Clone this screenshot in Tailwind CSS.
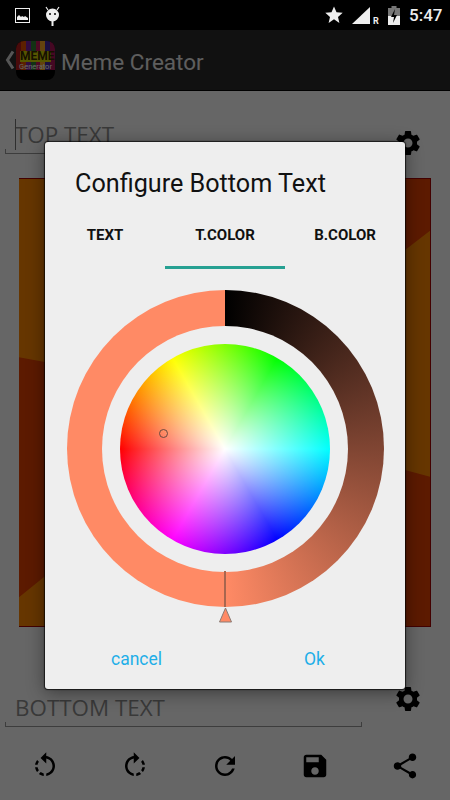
<!DOCTYPE html>
<html lang="en">
<head>
    <meta charset="UTF-8">
    <meta name="viewport" content="width=device-width, initial-scale=1.0">
    <title>Meme Creator</title>
    <script src="https://cdn.jsdelivr.net/npm/@tailwindcss/browser@4"></script>
</head>
<body class="bg-black font-['Roboto',sans-serif]">
    <div class="relative w-[450px] h-[800px] overflow-hidden bg-white flex flex-col">
        <!-- Status bar -->
        <div class="relative z-20 h-[30px] bg-black flex items-center text-[#eeeeee]">
            <svg class="absolute left-[15px] top-[8px] w-[15px] h-[15px]" viewBox="0 0 15 15">
                <rect x="0.5" y="0.5" width="14" height="14" fill="none" stroke="#eeeeee"/>
                <path d="M2 12V9l2-2 2 2 1-1 2 1 1-1 3 2v2z" fill="#eeeeee"/>
            </svg>
            <svg class="absolute left-[45px] top-[5px] w-[15px] h-[22px]" viewBox="0 0 15 22">
                <path d="M1 2l2 3M14 2l-2 3" stroke="#eeeeee" stroke-width="1.2"/>
                <path d="M1 10a6.500 6.500 0 0 1 13 0a6.500 6.500 0 0 1-13 0z" fill="#eeeeee"/>
                <rect x="6.500" y="16" width="2" height="5" fill="#eeeeee"/>
                <circle cx="5" cy="9" r="1" fill="#000"/>
                <circle cx="10" cy="9" r="1" fill="#000"/>
            </svg>
            <svg class="absolute left-[325px] top-[6px] w-[18px] h-[18px]" viewBox="0 0 18 18">
                <path d="M9 0.500l2.500 5.800 6.200.5-4.700 4.100 1.400 6.100L9 13.300l-5.400 3.700 1.400-6.100L.3 6.800l6.200-.5z" fill="#eeeeee"/>
            </svg>
            <svg class="absolute left-[352px] top-[7px] w-[18px] h-[17px]" viewBox="0 0 18 17">
                <path d="M18 0v17H0z" fill="#eeeeee"/>
            </svg>
            <span class="absolute left-[373px] top-[17px] text-[9px] leading-[9px] font-bold">R</span>
            <svg class="absolute left-[388px] top-[6px] w-[12px] h-[19px]" viewBox="0 0 12 19">
                <path d="M3.500 0h5v2H12v17H0V2h3.500z" fill="#777777"/>
                <path d="M0 10h12v9H0z" fill="#eeeeee"/>
                <path d="M7 3L3 11h3l-1 6 4-8H6z" fill="#000"/>
            </svg>
            <span class="absolute left-[409px] top-[4px] text-[17px] leading-[22px] font-medium">5:47</span>
        </div>

        <!-- App bar -->
        <div class="h-[61px] bg-[#2b2b2b] flex items-center pl-[5px] border-b border-black">
            <svg class="w-[10px] h-[20px]" viewBox="0 0 10 20">
                <path d="M8 1.500L2.500 10 8 18.500" fill="none" stroke="#d8d8d8" stroke-width="3"/>
            </svg>
            <div class="relative w-[39px] h-[39px] ml-[1px] rounded-lg overflow-hidden bg-black flex flex-col">
                <div class="h-[29px] flex">
                    <div class="flex-1 bg-[#b71c1c]"></div>
                    <div class="flex-1 bg-[#e65100]"></div>
                    <div class="flex-1 bg-[#7b1fa2]"></div>
                    <div class="flex-1 bg-[#2e7d32]"></div>
                    <div class="flex-1 bg-[#c2185b]"></div>
                    <div class="flex-1 bg-[#f9a825]"></div>
                    <div class="flex-1 bg-[#4527a0]"></div>
                    <div class="flex-1 bg-[#ad1457]"></div>
                </div>
                <div class="absolute left-[4px] top-[10px] w-[31px] h-[11px] bg-[#d6d600] text-[#3a2a00] text-[12px] leading-[11px] font-bold text-center">MEME</div>
                <div class="absolute left-0 top-[21px] w-full text-center text-white text-[7.500px] leading-[9px] whitespace-nowrap">Generator</div>
            </div>
            <h1 class="ml-[6px] mt-[4px] text-[22.500px] leading-[30px] text-[#ececec]">Meme Creator</h1>
        </div>

        <!-- Top text row -->
        <div class="h-[87px] relative flex items-start">
            <div class="ml-[5px] mt-[29px] w-[375px] h-[34px] border-b border-[#999999] relative">
                <p class="absolute left-[10px] top-0 font-['Open_Sans',sans-serif] text-[22.400px] leading-[30px] text-[#909090]">TOP TEXT</p>
                <div class="absolute left-[10px] -top-[1px] w-px h-[31px] bg-[#777777]"></div>
                <div class="absolute left-0 bottom-0 w-px h-[4px] bg-[#999999]"></div>
            </div>
            <svg class="ml-[13px] mt-[37px] w-[30px] h-[30px]" viewBox="0 0 24 24">
                <path d="M19.140 12.940c.04-.3.06-.61.06-.94 0-.32-.02-.64-.07-.94l2.030-1.580c.18-.14.23-.41.12-.61l-1.920-3.320c-.12-.22-.37-.29-.59-.22l-2.390.96c-.5-.38-1.030-.7-1.620-.94l-.36-2.540c-.04-.24-.24-.41-.48-.41h-3.840c-.24 0-.43.17-.47.41l-.36 2.540c-.59.24-1.130.57-1.620.94l-2.390-.96c-.22-.08-.47 0-.59.22L2.740 8.870c-.12.21-.08.47.12.61l2.030 1.580c-.05.3-.09.63-.09.94s.02.64.07.94l-2.030 1.580c-.18.14-.23.41-.12.61l1.920 3.320c.12.22.37.29.59.22l2.390-.96c.5.38 1.030.7 1.620.94l.36 2.540c.05.24.24.41.48.41h3.840c.24 0 .44-.17.47-.41l.36-2.540c.59-.24 1.130-.56 1.620-.94l2.390.96c.22.08.47 0 .59-.22l1.920-3.320c.12-.22.07-.47-.12-.61l-2.010-1.580zM12 15.600c-1.980 0-3.600-1.620-3.600-3.600s1.620-3.600 3.600-3.600 3.600 1.620 3.600 3.600-1.620 3.600-3.600 3.600z" fill="#000"/>
            </svg>
        </div>

        <!-- Meme image -->
        <div class="mx-[19px] h-[449px] shrink-0 bg-[#e64100] border-r border-t border-b border-[#a80000]">
            <svg class="w-full h-full block" viewBox="0 0 412 449" preserveAspectRatio="none">
                <path d="M0 0H60V190L0 179z" fill="#ff8800"/>
                <path d="M0 420L26 399L60 370V449H0z" fill="#ff8800"/>
                <path d="M360 90L386 72L412 52V299L386 292L360 285z" fill="#ff8800"/>
            </svg>
        </div>

        <!-- Bottom text row -->
        <div class="h-[124px] shrink-0 flex items-start">
            <div class="ml-[5px] mt-[64px] w-[357px] h-[36px] border-b border-[#999999] relative">
                <p class="absolute left-[10px] top-[2px] font-['Open_Sans',sans-serif] text-[22.400px] leading-[30px] text-[#909090]">BOTTOM TEXT</p>
                <div class="absolute left-0 bottom-0 w-px h-[4px] bg-[#999999]"></div>
                <div class="absolute right-0 bottom-0 w-px h-[4px] bg-[#999999]"></div>
            </div>
            <svg class="ml-[31px] mt-[57px] w-[30px] h-[30px]" viewBox="0 0 24 24">
                <path d="M19.140 12.940c.04-.3.06-.61.06-.94 0-.32-.02-.64-.07-.94l2.030-1.580c.18-.14.23-.41.12-.61l-1.920-3.320c-.12-.22-.37-.29-.59-.22l-2.390.96c-.5-.38-1.030-.7-1.620-.94l-.36-2.540c-.04-.24-.24-.41-.48-.41h-3.840c-.24 0-.43.17-.47.41l-.36 2.540c-.59.24-1.130.57-1.620.94l-2.390-.96c-.22-.08-.47 0-.59.22L2.740 8.870c-.12.21-.08.47.12.61l2.030 1.580c-.05.3-.09.63-.09.94s.02.64.07.94l-2.030 1.580c-.18.14-.23.41-.12.61l1.920 3.320c.12.22.37.29.59.22l2.390-.96c.5.38 1.030.7 1.620.94l.36 2.540c.05.24.24.41.48.41h3.840c.24 0 .44-.17.47-.41l.36-2.540c.59-.24 1.130-.56 1.620-.94l2.390.96c.22.08.47 0 .59-.22l1.920-3.320c.12-.22.07-.47-.12-.61l-2.010-1.580zM12 15.600c-1.980 0-3.600-1.620-3.600-3.600s1.620-3.600 3.600-3.600 3.600 1.620 3.600 3.600-1.620 3.600-3.600 3.600z" fill="#000"/>
            </svg>
        </div>

        <!-- Bottom toolbar -->
        <div class="h-[49px] shrink-0 grid grid-cols-5 items-start justify-items-center">
            <svg class="w-[30px] h-[30px]" viewBox="0 0 24 24"><path d="M7.110 8.530L5.700 7.110C4.800 8.270 4.240 9.610 4.070 11h2.020c.14-.87.49-1.720 1.020-2.470zM6.090 13H4.070c.17 1.390.72 2.730 1.620 3.890l1.410-1.420c-.52-.75-.87-1.590-1.010-2.470zm1.010 5.320c1.160.9 2.510 1.440 3.900 1.610V17.900c-.87-.15-1.710-.49-2.460-1.030L7.100 18.320zM13 4.070V1L8.450 5.550 13 10V6.090c2.840.48 5 2.940 5 5.910s-2.160 5.430-5 5.910v2.020c3.950-.49 7-3.850 7-7.930s-3.050-7.440-7-7.930z" fill="#000"/></svg>
            <svg class="w-[30px] h-[30px]" viewBox="0 0 24 24"><path d="M15.550 5.550L11 1v3.070C7.060 4.560 4 7.920 4 12s3.050 7.440 7 7.930v-2.020c-2.840-.48-5-2.940-5-5.910s2.160-5.430 5-5.910V10l4.550-4.450zM19.930 11c-.17-1.390-.72-2.730-1.620-3.890l-1.420 1.420c.54.75.88 1.600 1.020 2.470h2.020zM13 17.900v2.020c1.390-.17 2.740-.71 3.900-1.610l-1.440-1.440c-.75.54-1.590.89-2.460 1.030zm3.890-2.420l1.420 1.410c.9-1.160 1.450-2.500 1.620-3.890h-2.020c-.14.87-.48 1.720-1.020 2.480z" fill="#000"/></svg>
            <svg class="w-[30px] h-[30px]" viewBox="0 0 24 24"><path d="M17.650 6.350C16.200 4.900 14.210 4 12 4c-4.420 0-7.990 3.580-7.990 8s3.570 8 7.990 8c3.730 0 6.840-2.550 7.730-6h-2.080c-.82 2.330-3.040 4-5.650 4-3.310 0-6-2.690-6-6s2.690-6 6-6c1.660 0 3.140.69 4.220 1.780L13 11h7V4l-2.350 2.350z" fill="#000"/></svg>
            <svg class="w-[30px] h-[30px]" viewBox="0 0 24 24"><path d="M17 3H5c-1.110 0-2 .9-2 2v14c0 1.100.89 2 2 2h14c1.100 0 2-.9 2-2V7l-4-4zm-5 16c-1.660 0-3-1.340-3-3s1.340-3 3-3 3 1.340 3 3-1.340 3-3 3zm3-10H5V5h10v4z" fill="#000"/></svg>
            <svg class="w-[30px] h-[30px]" viewBox="0 0 24 24"><path d="M18 16.080c-.76 0-1.440.3-1.960.77L8.910 12.700c.05-.23.09-.46.09-.7s-.04-.47-.09-.7l7.050-4.110c.54.5 1.250.81 2.040.81 1.660 0 3-1.340 3-3s-1.340-3-3-3-3 1.340-3 3c0 .24.04.47.09.7L8.040 9.810C7.500 9.310 6.790 9 6 9c-1.660 0-3 1.340-3 3s1.340 3 3 3c.79 0 1.500-.31 2.040-.81l7.120 4.160c-.05.21-.08.43-.08.65 0 1.610 1.310 2.920 2.920 2.920 1.610 0 2.920-1.310 2.920-2.920s-1.310-2.920-2.920-2.920z" fill="#000"/></svg>
        </div>

        <!-- Dim layer -->
        <div class="absolute inset-0 bg-black/60 z-10"></div>

        <!-- Dialog -->
        <div class="absolute z-20 left-[45px] top-[142px] w-[360px] h-[547px] rounded-[3px] bg-[#eeeeee] shadow-[0_0_1px_1px_rgba(0,0,0,0.7),0_3px_18px_rgba(0,0,0,0.45)] flex flex-col">
            <h2 class="pt-[26px] pl-[30px] text-[25.200px] leading-[32px] text-[#111111]">Configure Bottom Text</h2>
            <div class="grid grid-cols-3 h-[69px] text-[15px] font-bold text-[#111111]">
                <div class="flex items-center justify-center pt-[2px]">TEXT</div>
                <div class="flex items-center justify-center pt-[5px] border-b-[3px] border-[#26a092]">T.COLOR</div>
                <div class="flex items-center justify-center pt-[2px]">B.COLOR</div>
            </div>
            <!-- Colour wheel -->
            <div class="relative mt-[21px] mx-auto w-[317px] h-[317px] rounded-full flex items-center justify-center bg-[conic-gradient(#000000_0deg,#ff8a65_180deg,#ff8a65_360deg)]">
                <div class="w-[246px] h-[246px] rounded-full bg-[#eeeeee] flex items-center justify-center">
                    <div class="relative w-[210px] h-[210px] rounded-full bg-[radial-gradient(circle_closest-side,#ffffff,rgba(255,255,255,0)),conic-gradient(from_30deg,#00ff00,#00ffff,#0000ff,#ff00ff,#ff0000,#ffff00,#00ff00)]">
                        <div class="absolute left-[39px] top-[85px] w-[9px] h-[9px] rounded-full border border-[#6b4a40]"></div>
                    </div>
                </div>
                <div class="absolute left-[157.500px] top-[281px] w-[2px] h-[36px] bg-[#a8664f]"></div>
                <svg class="absolute left-[152px] top-[317px] w-[13px] h-[16px]" viewBox="0 0 13 16">
                    <path d="M6.500 1L12.500 15H.5z" fill="#ff8a65" stroke="#8a7a74"/>
                </svg>
            </div>
            <div class="mt-auto h-[60px] grid grid-cols-2 text-[17.500px] text-[#1eaee8]">
                <div class="flex items-center pl-[66px]">cancel</div>
                <div class="flex items-center pl-[79px]">Ok</div>
            </div>
        </div>
    </div>
</body>
</html>
